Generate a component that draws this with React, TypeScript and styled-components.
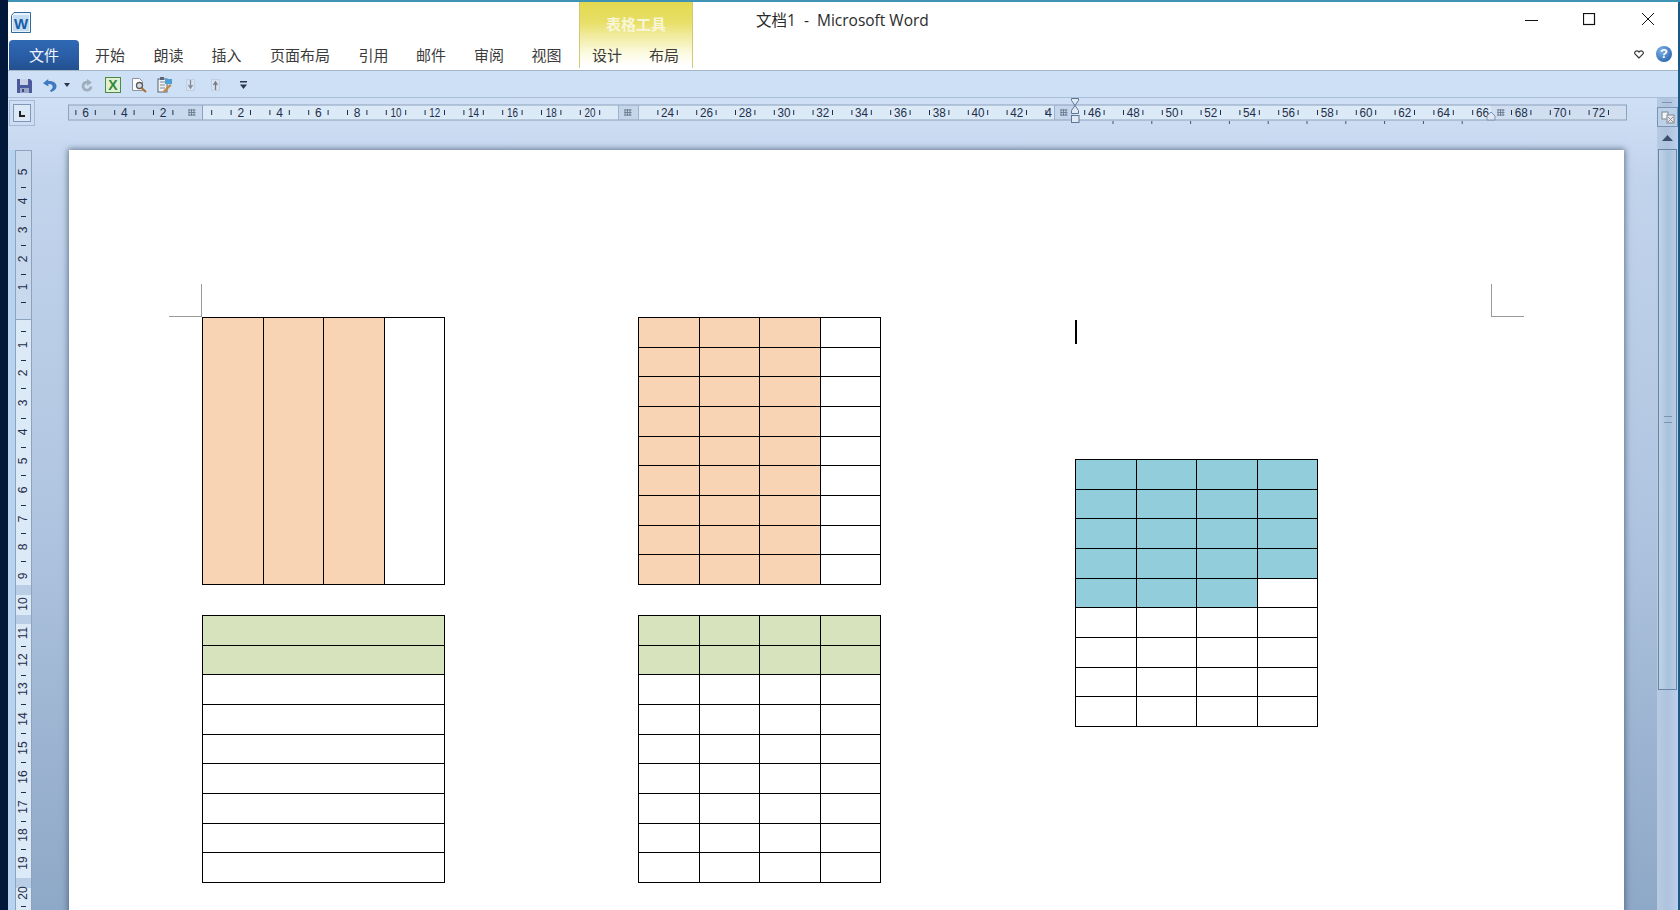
import React from "react";
import styled, { createGlobalStyle } from "styled-components";

const Global = createGlobalStyle`
  html, body { margin: 0; padding: 0; background: #02183a; overflow: hidden; }
  #root { width: 1680px; height: 910px; }
`;

const CJK = `"Noto Sans CJK SC", "Noto Sans", sans-serif`;

const Window = styled.div`
  width: 1680px; height: 910px; overflow: hidden; box-sizing: border-box;
  padding: 2px 2px 0 8px;
  background: linear-gradient(90deg, #02183a 0 8px, #1b5a86 8px);
  position: relative;
  display: flex; flex-direction: column;
  font-family: ${CJK};
  &::before { content: ""; position: absolute; left: 8px; right: 0; top: 0; height: 2px; background: #3f93b4; }
`;

const Header = styled.header`
  height: 68px; flex: none; display: flex; background: #fff;
`;
const LeftHead = styled.div`
  width: 571px; flex: none; display: flex; flex-direction: column; justify-content: space-between;
`;
const AppIcon = styled.div`
  margin: 10px 0 0 3px; height: 20px;
`;
const TabRow = styled.nav`
  display: flex; align-items: stretch; height: 30px;
`;
const FileTab = styled.div`
  width: 70px; margin: 0 2px 0 1px; flex: none; display: flex; align-items: center; justify-content: center;
  background: linear-gradient(180deg, #2f69b4 0%, #2a5da6 55%, #23508f 100%);
  border-radius: 4px 4px 0 0; color: #f2f6fc; font-size: 15px; padding-bottom: 2px; box-sizing: border-box;
`;
const Tab = styled.div<{ $w: number }>`
  width: ${p => p.$w}px; flex: none; display: flex; align-items: center; justify-content: center; box-sizing: border-box;
  color: #3b3b3b; font-size: 15px; padding-bottom: 2px;
`;
const Context = styled.div`
  width: 114px; flex: none; margin-top: -2px; height: 68px; display: flex; flex-direction: column;
  background: linear-gradient(180deg, #e3d94e 0%, #e7df67 33%, #f1eb9d 52%, #fbf9dc 76%, #ffffff 96%);
  border-left: 1px solid #cfc878; border-right: 1px solid #cfc878; box-sizing: border-box;
`;
const ContextLabel = styled.div`
  height: 40px; flex: none; padding-top: 10px; box-sizing: border-box; text-align: center; color: #f8f6d8; font-size: 15px; font-weight: 700; line-height: 28px;
`;
const ContextTabs = styled.div`
  display: flex; height: 30px; flex: none;
`;
const RightHead = styled.div`
  flex: 1; display: flex; flex-direction: column; min-width: 0;
`;
const TitleRow = styled.div`
  height: 38px; display: flex; align-items: flex-start; justify-content: space-between;
`;
const Title = styled.div`
  margin: 5px 0 0 63px; font-size: 15.5px; line-height: 26px; color: #2b2b2b; white-space: pre;
  font-family: "Open Sans", ${CJK};
`;
const Controls = styled.div`
  display: flex; align-items: center; gap: 45px; margin: 10px 23px 0 0;
`;
const HelpRow = styled.div`
  display: flex; justify-content: flex-end; align-items: center; gap: 12px; padding: 4px 6px 0 0; height: 20px;
`;
const Help = styled.div`
  width: 16px; height: 16px; border-radius: 50%; color: #fff; font: 700 13px/16px "Liberation Sans", sans-serif; text-align: center;
  background: radial-gradient(circle at 35% 30%, #7fb0e6, #2f6db4 75%);
`;

const QuickBar = styled.div`
  height: 28px; flex: none; display: flex; align-items: center; box-sizing: border-box; padding: 2px 0 0 9px;
  background: #cee0f6; border-top: 1px solid #a5b6c9; border-bottom: 1px solid #a9bdd6;
`;
const Slot = styled.div<{ $w: number }>`
  width: ${p => p.$w}px; flex: none; display: flex; align-items: center; height: 18px;
`;

const Work = styled.div`
  flex: 1; min-height: 0; display: grid; grid-template-columns: 61px 1555px 33px 21px; grid-template-rows: 52px 1fr;
  background: linear-gradient(180deg, #cfe0f6 0%, #c2d4ec 10%, #b0c5e0 50%, #8ea8c7 100%);
`;
const Corner = styled.div`
  padding: 2px 0 0 1px;
`;
const CornerFrame = styled.div`
  width: 26px; height: 26px; box-sizing: border-box; border: 1px solid #a5bbd5; display: flex; align-items: center; justify-content: center;
`;
const TabStop = styled.div`
  width: 18px; height: 18px; box-sizing: border-box; border: 1px solid #8098b5; background: #dbe8f6; display: flex; align-items: center; justify-content: center;
  &::after { content: ""; width: 4px; height: 4px; border-left: 2px solid #222; border-bottom: 2px solid #222; margin-top: 1px; }
`;
const HRulerCell = styled.div`
  grid-column: 2 / 4; margin: -3px 0 0 -1px;
`;
const Scroll = styled.aside`
  grid-column: 4; grid-row: 1 / 3; display: flex; flex-direction: column; align-items: stretch;
  background: linear-gradient(90deg, #b9cbe2, #aec3de 50%, #bcd0ea);
`;
const Splitter = styled.div`
  height: 9px; position: relative;
  &::after { content: ""; position: absolute; left: 5px; right: 6px; top: 4px; height: 1px; background: #7f93ac; }
`;
const ViewBtn = styled.div`
  height: 20px; box-sizing: border-box; border: 1px solid #7d95b4; background: #bcd0e8; display: flex; align-items: center; justify-content: center;
`;
const Arrow = styled.div<{ $h: number }>`
  height: ${p => p.$h}px; flex: none; display: flex; align-items: center; justify-content: center;
`;
const Thumb = styled.div`
  height: 541px; flex: none; box-sizing: border-box; margin: 0 1px; border: 1px solid #6a84a5;
  background: linear-gradient(90deg, #c0d4e8, #a7c2dc 55%, #b6cde2);
  display: flex; align-items: center; justify-content: center;
  &::after { content: ""; width: 8px; height: 5px; border-top: 1px solid #7d93ad; border-bottom: 1px solid #7d93ad; }
`;
const Track = styled.div`
  flex: 1; min-height: 0;
`;

const Rail = styled.div`
  background: linear-gradient(90deg, #b6d3f1 0 7px, transparent 7px);
  padding-left: 7px;
`;
const Page = styled.main`
  background: #fff; box-shadow: 0 0 6px 1px rgba(70, 85, 110, .75);
  position: relative; box-sizing: border-box; height: 800px; padding: 167px 0 0 133px;
  display: grid; grid-template-columns: repeat(3, 243px); grid-template-rows: 268px 268px; column-gap: 193px; row-gap: 30px;
  align-content: start;
`;
const Crop = styled.div<{ $right?: boolean }>`
  position: absolute; top: 134px; width: 32px; height: 32px;
  ${p => p.$right
    ? `left: 1422px; border-left: 1px solid #9a9a9a; border-bottom: 1px solid #9a9a9a;`
    : `left: 100px; border-right: 1px solid #9a9a9a; border-bottom: 1px solid #9a9a9a;`}
`;
const Tbl = styled.table`
  width: 243px; height: 268px; border-collapse: collapse; table-layout: fixed;
`;
const Cell = styled.td<{ $fill?: string }>`
  border: 1.5px solid #000; padding: 0; background: ${p => p.$fill ?? "#fff"};
`;
const BlueCol = styled.div`
  grid-column: 3; grid-row: 1 / 3; display: flex; flex-direction: column; margin-left: 1px;
`;
const Caret = styled.div`
  width: 2px; height: 24px; background: #000; margin: 3px 0 115px;
`;

const ORANGE = "#f9d4b4", GREEN = "#d7e3bc", BLUE = "#92cddc";

function Grid({ rows, cols, fill }: { rows: number; cols: number; fill: (r: number, c: number) => string | undefined }) {
  return (
    <Tbl>
      <tbody>
        {Array.from({ length: rows }, (_, r) => (
          <tr key={r}>
            {Array.from({ length: cols }, (_, c) => <Cell key={c} $fill={fill(r, c)} />)}
          </tr>
        ))}
      </tbody>
    </Tbl>
  );
}

const U = 19.4, ORIGIN = 134; // ruler-local x of 0
const INK = "#1d2f4c";

function HRuler() {
  const nums: number[] = [];
  for (let n = 2; n <= 72; n += 2) if (n !== 22) nums.push(n);
  const ticks: number[] = [];
  for (let k = -13; k <= 145; k += 2) {
    const p = k * 9.7;
    if (k === 43 || k === 45 || k === 89 || k === -1 || k === 133) continue;
    ticks.push(p);
  }
  const hatch = (x: number) => (
    <g stroke="#6f7f94" strokeWidth="1">
      {[0, 2.5, 5].map(d => <line key={"v" + d} x1={x - 3 + d} x2={x - 3 + d} y1={14} y2={21} />)}
      {[0, 2.5, 5].map(d => <line key={"h" + d} x1={x - 3.5} x2={x + 3.5} y1={15 + d} y2={15 + d} />)}
    </g>
  );
  const defaults: number[] = [];
  for (let i = 0; i < 10; i++) defaults.push(1045 + i * 38.8);
  return (
    <svg width="1560" height="30" style={{ display: "block" }}>
      <rect x="0.5" y="10" width="1558" height="15" fill="#dce9f6" />
      <rect x="0.5" y="10" width="134" height="15" fill="#c9d9ed" />
      <rect x="1423" y="10" width="135" height="15" fill="#d0def0" />
      <rect x="550" y="10" width="21" height="15" fill="#c5d6eb" />
      <rect x="986" y="10" width="20" height="15" fill="#c5d6eb" />
      <rect x="0.5" y="10" width="1558" height="15" fill="none" stroke="#8da2bc" />
      <line x1="134.5" x2="134.5" y1="10" y2="25" stroke="#8da2bc" />
      <line x1="550.5" x2="550.5" y1="10" y2="25" stroke="#9fb2c9" />
      <line x1="570.5" x2="570.5" y1="10" y2="25" stroke="#9fb2c9" />
      <line x1="986.5" x2="986.5" y1="10" y2="25" stroke="#9fb2c9" />
      {ticks.map(p => <line key={p} x1={ORIGIN + p} x2={ORIGIN + p} y1="15" y2="20" stroke={INK} />)}
      {[2, 4, 6].map(n => (
        <text key={"n" + n} x={ORIGIN - n * U} y="22" textAnchor="middle" fontSize="12" fill={INK} fontFamily="Liberation Sans, sans-serif">{n}</text>
      ))}
      {nums.map(n => n === 44
        ? <text key={n} x={ORIGIN + 44 * U - 7} y="22" textAnchor="middle" fontSize="12" fill={INK} fontFamily="Liberation Sans, sans-serif">4</text>
        : <text key={n} x={ORIGIN + n * U} y="22" textAnchor="middle" fontSize="12" textLength={n >= 10 ? (n <= 20 ? 11 : 13) : undefined} lengthAdjust="spacingAndGlyphs" fill={INK} fontFamily="Liberation Sans, sans-serif">{n}</text>)}
      {hatch(124)}{hatch(560)}{hatch(996)}{hatch(1433)}
      {defaults.map(x => <line key={x} x1={x} x2={x} y1="26" y2="29" stroke="#44566f" />)}
      <path d="M1003.5 3.500h7v2l-3.500 5 3.500 5v3h-7v-3l3.500-5-3.500-5z" fill="#dfe9f5" stroke="#5d7795" />
      <rect x="1003.5" y="20.500" width="7.500" height="7" fill="#dfe9f5" stroke="#5d7795" />
      <path d="M1423 17l4 4v4h-8v-4z" fill="#dfe9f5" stroke="#7d93ad" />
    </svg>
  );
}

function VRuler() {
  const below = [345, 373, 403, 432, 461, 490, 519, 547, 576, 604, 633, 660, 689, 719, 748, 777, 807, 835, 863, 893];
  const above = [172, 201, 230, 259, 287];
  const ticks = [187, 216, 245, 274, 302, 331, 360, 388, 418, 447, 475, 505, 533, 561, 646, 675, 704, 733, 762, 792, 821, 849, 906];
  const o = 150;
  const label = (y: number, n: number) => (
    <text key={y} x="8" y={y - o} textAnchor="middle" dominantBaseline="central" fontSize="12" fill={INK} fontFamily="Liberation Sans, sans-serif"
      transform={`rotate(-90 8 ${y - o})`}>{n}</text>
  );
  return (
    <svg width="17" height="760" style={{ display: "block" }}>
      <rect x="0.5" y="0.5" width="16" height="760" fill="#dce9f6" stroke="#8da2bc" />
      <rect x="0.5" y="0.5" width="16" height="169" fill="#c9d9ed" stroke="#8da2bc" />
      <rect x="1" y="435" width="15" height="10" fill="#b9cde6" />
      <rect x="1" y="465" width="15" height="9" fill="#b9cde6" />
      <rect x="1" y="728" width="15" height="10" fill="#b9cde6" />
      {ticks.map(y => <line key={y} x1="6" x2="11" y1={y - o + 0.5} y2={y - o + 0.5} stroke={INK} />)}
      {above.map((y, i) => label(y, 5 - i))}
      {below.map((y, i) => label(y, i + 1))}
    </svg>
  );
}

const WordIcon = () => (
  <svg width="20" height="21" viewBox="0 0 20 21">
    <path d="M0.500 3.500L3 0.500H19.500V20.500H0.500z" fill="#e9f3fb" stroke="#356a9d" />
    <rect x="2" y="3" width="16" height="16" fill="#c4dcf1" />
    <text x="10" y="16.500" textAnchor="middle" fontSize="15" fontWeight="700" fill="#1a5da8" fontFamily="Liberation Sans, sans-serif">W</text>
  </svg>
);
const Save = () => (
  <svg width="15" height="15" viewBox="0 0 15 15">
    <path d="M0 1h13l2 2v12H0z" fill="#4a5a9c" />
    <rect x="3" y="1" width="8" height="6" fill="#c9d2e6" />
    <rect x="3" y="10" width="9" height="5" fill="#9aa6c6" />
    <rect x="5" y="11" width="2" height="3" fill="#3d4a80" />
  </svg>
);
const Undo = ({ c }: { c: string }) => (
  <svg width="14" height="14" viewBox="0 0 14 14">
    <path d="M5.200 1L0 5.200l5.400 3.300V6c2.600-.3 4.300.9 4.300 2.800 0 1.500-1 2.900-2.900 3.700l1.300 1.500c3.300-1 5.400-3 5.400-5.700 0-3.400-3-5.300-8.200-5.300z" fill={c} />
  </svg>
);
const Redo = () => (
  <svg width="12" height="13" viewBox="0 0 12 13">
    <path d="M7.500 3.500A4 4 0 1 0 10 7.500" fill="none" stroke="#a0adbd" strokeWidth="2.800" />
    <path d="M6 0v7l5-3.500z" fill="#a0adbd" />
  </svg>
);
const Excel = () => (
  <svg width="16" height="16" viewBox="0 0 16 16">
    <rect x="0.500" y="0.500" width="15" height="15" fill="#dff0d4" stroke="#4f8a45" />
    <text x="8" y="13" textAnchor="middle" fontSize="14" fontWeight="700" fill="#2f8a35" fontFamily="Liberation Sans, sans-serif">X</text>
  </svg>
);
const Preview = () => (
  <svg width="16" height="16" viewBox="0 0 16 16">
    <path d="M1.500 1.500h7l3 3v9h-10z" fill="#fbfbfd" stroke="#8a92a2" />
    <circle cx="8.500" cy="8.500" r="3" fill="#cfdff0" stroke="#5f5a50" strokeWidth="1.300" />
    <path d="M10.500 11l4.500 4" stroke="#a5713c" strokeWidth="2.200" />
  </svg>
);
const Spell = () => (
  <svg width="16" height="16" viewBox="0 0 16 16">
    <rect x="1" y="2" width="9" height="13" fill="#f1f2f4" stroke="#5a6272" />
    <path d="M3 5h5M3 8h5M3 11h5" stroke="#7d8594" />
    <rect x="3" y="0" width="4" height="3" fill="#5d6675" />
    <rect x="8" y="2" width="7" height="5" fill="#4d9fd8" />
    <path d="M6 14l7-7 1.500 1.500-7 7z" fill="#c08a3a" />
  </svg>
);
const StepDown = () => (
  <svg width="9" height="14" viewBox="0 0 9 14">
    <rect x="0.500" y="1.500" width="8" height="11" fill="#d8e2ef" stroke="#aebccd" strokeDasharray="1 1" />
    <path d="M4.500 2v7M2.500 7l2 3 2-3" fill="none" stroke="#7f8b9b" strokeWidth="1.300" />
  </svg>
);
const StepUp = () => (
  <svg width="9" height="14" viewBox="0 0 9 14">
    <rect x="0.500" y="1.500" width="8" height="11" fill="#d8e2ef" stroke="#aebccd" strokeDasharray="1 1" />
    <path d="M4.500 12V5M2.500 7l2-3 2 3" fill="none" stroke="#6f7b8b" strokeWidth="1.300" />
  </svg>
);
const SmallCaret = () => (
  <svg width="6" height="4" viewBox="0 0 6 4"><path d="M0 0h6L3 4z" fill="#28374e" /></svg>
);
const MoreCaret = () => (
  <svg width="7" height="8" viewBox="0 0 7 8"><rect width="7" height="1.500" fill="#28374e" /><path d="M0 3.500h7L3.500 8z" fill="#28374e" /></svg>
);
const Minimize = () => (
  <svg width="13" height="12" viewBox="0 0 13 12"><line x1="0" x2="13" y1="7.500" y2="7.500" stroke="#111" /></svg>
);
const Maximize = () => (
  <svg width="13" height="13" viewBox="0 0 13 13"><rect x="0.500" y="0.500" width="11" height="11" fill="none" stroke="#111" strokeWidth="1.200" /></svg>
);
const Close = () => (
  <svg width="14" height="14" viewBox="0 0 14 14"><path d="M1 1l12 12M13 1L1 13" stroke="#111" strokeWidth="1" /></svg>
);
const Heart = () => (
  <svg width="10" height="9" viewBox="0 0 10 9"><path d="M5 8L1 4C-.2 2 2.500-.5 5 2c2.500-2.500 5.200 0 4 2z" fill="#fff" stroke="#3a3a3a" strokeWidth="1.200" /></svg>
);
const PageIcon = () => (
  <svg width="14" height="13" viewBox="0 0 14 13">
    <rect x="1" y="1" width="6" height="7" fill="#f3f5f8" stroke="#7d8796" />
    <rect x="6" y="4" width="7" height="8" fill="#e6eaf0" stroke="#7d8796" />
    <path d="M7 6l5 5M12 6l-5 5" stroke="#9a8e80" />
  </svg>
);
const Tri = ({ down }: { down?: boolean }) => (
  <svg width="11" height="6" viewBox="0 0 11 6"><path d={down ? "M0 0h11L5.500 6z" : "M0 6h11L5.500 0z"} fill="#3c4f6c" /></svg>
);

export default function App() {
  const tabs: [string, number][] = [["开始", 58], ["朗读", 59], ["插入", 57], ["页面布局", 90], ["引用", 57], ["邮件", 58], ["审阅", 58], ["视图", 57]];
  const quick: [React.ReactNode, number][] = [
    [<Save />, 26], [<Undo c="#3f79c0" />, 21], [<SmallCaret />, 17], [<Redo />, 24], [<Excel />, 26],
    [<Preview />, 26], [<Spell />, 29], [<StepDown />, 25], [<StepUp />, 29], [<MoreCaret />, 10],
  ];
  return (
    <>
      <Global />
      <Window>
        <Header>
          <LeftHead>
            <AppIcon><WordIcon /></AppIcon>
            <TabRow>
              <FileTab>文件</FileTab>
              {tabs.map(([t, w]) => <Tab key={t} $w={w}>{t}</Tab>)}
            </TabRow>
          </LeftHead>
          <Context>
            <ContextLabel>表格工具</ContextLabel>
            <ContextTabs>
              <Tab $w={54}>设计</Tab>
              <Tab $w={60}>布局</Tab>
            </ContextTabs>
          </Context>
          <RightHead>
            <TitleRow>
              <Title>文档1  -  Microsoft Word</Title>
              <Controls><Minimize /><Maximize /><Close /></Controls>
            </TitleRow>
            <HelpRow><Heart /><Help>?</Help></HelpRow>
          </RightHead>
        </Header>
        <QuickBar>
          {quick.map(([node, w], i) => <Slot key={i} $w={w}>{node}</Slot>)}
        </QuickBar>
        <Work>
          <Corner><CornerFrame><TabStop /></CornerFrame></Corner>
          <HRulerCell><HRuler /></HRulerCell>
          <Scroll>
            <Splitter />
            <ViewBtn><PageIcon /></ViewBtn>
            <Arrow $h={22}><Tri /></Arrow>
            <Thumb />
            <Track />
            <Arrow $h={20}><Tri down /></Arrow>
          </Scroll>
          <Rail><VRuler /></Rail>
          <Page>
            <Crop />
            <Crop $right />
            <Grid rows={1} cols={4} fill={(_, c) => (c < 3 ? ORANGE : undefined)} />
            <Grid rows={9} cols={4} fill={(_, c) => (c < 3 ? ORANGE : undefined)} />
            <BlueCol>
              <Caret />
              <Grid rows={9} cols={4} fill={(r, c) => (r < 4 || (r === 4 && c < 3) ? BLUE : undefined)} />
            </BlueCol>
            <Grid rows={9} cols={1} fill={r => (r < 2 ? GREEN : undefined)} />
            <Grid rows={9} cols={4} fill={r => (r < 2 ? GREEN : undefined)} />
          </Page>
        </Work>
      </Window>
    </>
  );
}
